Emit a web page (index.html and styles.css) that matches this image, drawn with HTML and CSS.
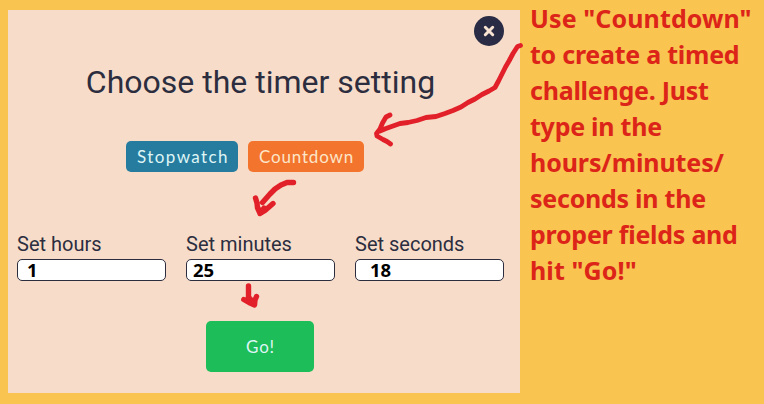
FILE: index.html
```
<!DOCTYPE html>
<html lang="en">
<head>
<meta charset="utf-8">
<title>Timer setting</title>
<link rel="stylesheet" href="styles.css">
</head>
<body>
<main class="page">
  <section class="panel">
    <button class="close" aria-label="Close">
      <svg width="30" height="30" viewBox="0 0 30 30"><path d="M11.3 11.3 18.7 18.7M18.7 11.3 11.3 18.7"/></svg>
    </button>
    <h1 class="title">Choose the timer setting</h1>
    <div class="modes">
      <button class="mode stopwatch">Stopwatch</button>
      <button class="mode countdown">Countdown</button>
    </div>
    <div class="fields">
      <label class="field">Set hours<input class="hours" type="text" value="1"></label>
      <label class="field">Set minutes<input class="minutes" type="text" value="25"></label>
      <label class="field">Set seconds<input class="seconds" type="text" value="18"></label>
    </div>
    <button class="go">Go!</button>
  </section>
  <aside class="note">
    <span class="wide">Use "Countdown"</span>
    <span>to create a timed</span>
    <span>challenge. Just</span>
    <span>type in the</span>
    <span class="medium">hours/minutes/</span>
    <span>seconds in the</span>
    <span>proper fields and</span>
    <span class="wide">hit "Go!"</span>
  </aside>
  <svg class="arrows" viewBox="0 0 764 404" aria-hidden="true">
    <path d="M520.5 45.5 517.5 46.5 513 53.5 509 61 505.5 67 502 74 498.500 81 495 87.500 489 91 482 94.500 475 99 468 102.500 461 107 453 110.500 445 113.500 436 116.500 426 117.500 417 120.500 408 122.500 400 123.500 393 126 386 128.500 380 131M390 115 386 117 382.500 123 380 129 376.500 133.500 377 136 383 139.500 387 141.500 390.500 144"/>
    <path class="thick" d="M293.500 182.500 287 182.500 281 185 275 189 270 194 266 198.500 262.500 202.500M255.500 198 257 203 257.500 208 260 213.500 265 210.500 269 207 273 203.500M258 208 260 213.500 264 208"/>
    <path class="thick" d="M248.500 286 248.500 299M243.800 299.500 249 302.500 254.500 305 255 300 256.500 296.500M248.500 299 254 304.500M248.500 297 252 301"/>
  </svg>
</main>
</body>
</html>
```

FILE: styles.css
```
* { box-sizing: border-box; }
body { margin: 0; background: #f9c550; }
button { border: 0; padding: 0; }
.page {
  position: relative;
  display: flex;
  width: 764px;
  height: 404px;
  padding: 10px 0 11px 8px;
  overflow: hidden;
}
.panel {
  position: relative;
  display: flex;
  flex-direction: column;
  align-items: center;
  width: 512px;
  height: 383px;
  padding: 52px 16px 0 9px;
  background: #f7ddc9;
  color: #2c2d3f;
  font-family: Roboto, sans-serif;
}
.close {
  position: absolute;
  top: 6px;
  right: 16px;
  width: 30px;
  height: 30px;
  border-radius: 50%;
  background: #292c44;
}
.close svg { display: block; fill: none; stroke: #f9e3d2; stroke-width: 3; stroke-linecap: round; }
.title {
  margin: 0;
  font-size: 32px;
  font-weight: 400;
  line-height: 40px;
  white-space: nowrap;
}
.modes { display: flex; gap: 10px; margin: 39px 0 0 -31px; }
.mode, .go {
  height: 31px;
  border-radius: 5px;
  color: #dff5f5;
  font: 17px/32px Lato, sans-serif;
  letter-spacing: 1.4px;
  text-align: center;
}
.stopwatch { width: 112px; padding-left: 2px; background: #267c9f; }
.countdown { width: 116px; padding-left: 1px; background: #f3742d; color: #fce5c8; letter-spacing: .8px; }
.fields { display: flex; gap: 20px; align-self: stretch; margin-top: 60px; }
.field { display: flex; flex-direction: column; width: 149px; font-size: 20px; line-height: 25px; }
.field input {
  width: 149px;
  height: 22px;
  margin: 2px 0 0;
  padding: 0 0 2px 6px;
  border: 1px solid #2c2d3f;
  border-radius: 5px;
  background: #fff;
  color: #000;
  font: bold 18.5px/20px "Noto Sans", sans-serif;
}
.field .hours { padding-left: 9px; }
.field .seconds { padding-left: 14px; }
.go {
  width: 108px;
  height: 51px;
  margin: 40px 0 0 -2px;
  padding-left: 2px;
  background: #1dbe59;
  line-height: 52px;
  letter-spacing: .8px;
}
.note {
  display: flex;
  flex-direction: column;
  align-items: flex-start;
  margin: -10px 0 0 10px;
  color: #dc2419;
  font: bold 25px/36px "Noto Sans", sans-serif;
  letter-spacing: -.25px;
  white-space: nowrap;
}
.note .wide { letter-spacing: .1px; }
.note .medium { letter-spacing: -.1px; }
.arrows {
  position: absolute;
  inset: 0;
  width: 764px;
  height: 404px;
  pointer-events: none;
  fill: none;
  stroke: #e22029;
  stroke-width: 4.8;
  stroke-linecap: round;
  stroke-linejoin: round;
}
.thick { stroke-width: 5.4; }
```
